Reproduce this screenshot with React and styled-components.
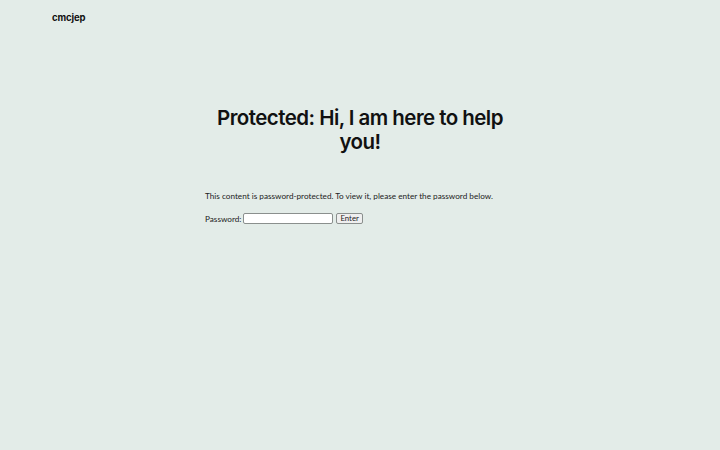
import React from "react";
import styled, { createGlobalStyle } from "styled-components";

const Global = createGlobalStyle`
  html, body { margin: 0; padding: 0; background: #e3ece8; }
  body { font-family: "Lato", "Liberation Sans", sans-serif; color: #1a1a1a; }
  * { box-sizing: border-box; }
`;

const Page = styled.div`
  min-height: 450px;
  background: #e3ece8;
  display: flex;
  flex-direction: column;
`;

const Header = styled.header`
  padding: 5px 52px 0;
  height: 24px;
`;

const Logo = styled.a`
  font-family: "Inter", "Liberation Sans", sans-serif;
  font-weight: 700;
  font-size: 9.5px;
  letter-spacing: -0.1px;
  color: #111;
  text-decoration: none;
`;

const Main = styled.main`
  display: flex;
  flex-direction: column;
  align-items: center;
  padding-top: 82px;
`;

const Title = styled.h1`
  margin: 0;
  width: 310px;
  text-align: center;
  font-family: "Inter", "Liberation Sans", sans-serif;
  font-weight: 600;
  font-size: 20.5px;
  line-height: 24px;
  letter-spacing: -0.55px;
  color: #111;
`;

const Content = styled.div`
  width: 310px;
  margin-top: 35px;
  font-size: 8.2px;
  color: #222;
`;

const Para = styled.p`
  margin: 0 0 10px;
  line-height: 14px;
`;

const Label = styled.label`
  display: flex;
  align-items: center;
  gap: 2px;
  margin-top: 1px;
`;

const Input = styled.input`
  width: 90px;
  height: 11px;
  margin: 0;
  padding: 0 2px;
  border: 1px solid #8a8f8d;
  border-radius: 2px;
  background: #fff;
  font-size: 8px;
`;

const Button = styled.button`
  height: 11px;
  margin: 0 0 0 1px;
  padding: 0 3px;
  border: 1px solid #8a8f8d;
  border-radius: 2px;
  background: #efefef;
  font-family: "Lato", "Liberation Sans", sans-serif;
  font-size: 7.8px;
  line-height: 9px;
  color: #222;
`;

export default function App() {
  return (
    <Page>
      <Global />
      <Header>
        <Logo href="#">cmcjep</Logo>
      </Header>
      <Main>
        <Title>Protected: Hi, I am here to help you!</Title>
        <Content>
          <Para>This content is password-protected. To view it, please enter the password below.</Para>
          <Label>
            Password: <Input type="password" />
            <Button type="button">Enter</Button>
          </Label>
        </Content>
      </Main>
    </Page>
  );
}
